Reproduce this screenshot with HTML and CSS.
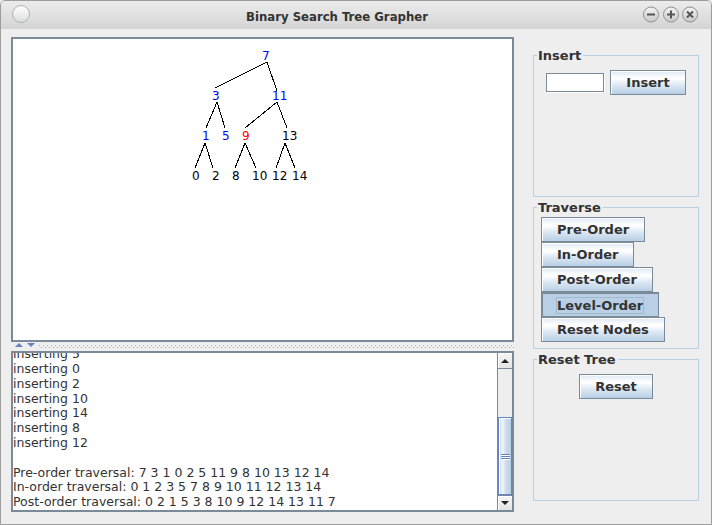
FILE: index.html
```html
<!DOCTYPE html>
<html>
<head>
<meta charset="utf-8">
<title>Binary Search Tree Grapher</title>
<link rel="stylesheet" href="styles.css">
</head>
<body>
<div class="window">
  <div class="titlebar">
    <svg class="tb-menu" width="22" height="28" viewBox="0 0 22 28">
      <defs>
        <linearGradient id="gMenu" x1="0" y1="0" x2="0" y2="1">
          <stop offset="0" stop-color="#ffffff"/>
          <stop offset="1" stop-color="#dcdcdc"/>
        </linearGradient>
        <linearGradient id="gBtn" x1="0" y1="0" x2="0" y2="1">
          <stop offset="0" stop-color="#f4f4f4"/>
          <stop offset="1" stop-color="#c9c9c9"/>
        </linearGradient>
      </defs>
      <circle cx="11" cy="13" r="8.5" fill="url(#gMenu)" stroke="#a9b1bb" stroke-width="1"/>
    </svg>
    <div class="title">Binary Search Tree Grapher</div>
    <svg class="tb-buttons" width="58" height="28" viewBox="0 0 58 28">
      <circle cx="9" cy="13.5" r="7.5" fill="url(#gBtn)" stroke="#8f8f8f"/>
      <rect x="5" y="12.5" width="8" height="2" fill="#555"/>
      <circle cx="29" cy="13.5" r="7.5" fill="url(#gBtn)" stroke="#8f8f8f"/>
      <rect x="25" y="12.5" width="8" height="2" fill="#555"/>
      <rect x="28" y="9.5" width="2" height="8" fill="#555"/>
      <circle cx="48" cy="13.5" r="7.5" fill="url(#gBtn)" stroke="#8f8f8f"/>
      <path d="M45 10.5 L51 16.5 M51 10.5 L45 16.5" stroke="#555" stroke-width="2"/>
    </svg>
  </div>

  <div class="content">
    <div class="left">
      <div class="tree-panel">
        <svg width="499" height="301" viewBox="13 39 499 301" class="tree">
          <g stroke="#000" stroke-width="1" shape-rendering="crispEdges">
            <line x1="267" y1="62" x2="215" y2="88"/>
            <line x1="267" y1="62" x2="277" y2="91"/>
            <line x1="217" y1="102" x2="206" y2="128"/>
            <line x1="217" y1="102" x2="225" y2="128"/>
            <line x1="277" y1="102" x2="245" y2="128"/>
            <line x1="277" y1="102" x2="287" y2="128"/>
            <line x1="205" y1="143" x2="195" y2="168"/>
            <line x1="205" y1="143" x2="213" y2="168"/>
            <line x1="245" y1="143" x2="235" y2="168"/>
            <line x1="245" y1="143" x2="256" y2="168"/>
            <line x1="285" y1="143" x2="276" y2="168"/>
            <line x1="285" y1="143" x2="295" y2="168"/>
          </g>
          <g class="nodes">
            <text x="262" y="60" class="blue">7</text>
            <text x="212" y="100" class="blue">3</text>
            <text x="272" y="100" class="blue">11</text>
            <text x="202" y="140" class="blue">1</text>
            <text x="222" y="140" class="blue">5</text>
            <text x="242" y="140" class="red">9</text>
            <text x="282" y="140">13</text>
            <text x="192" y="180">0</text>
            <text x="212" y="180">2</text>
            <text x="232" y="180">8</text>
            <text x="252" y="180">10</text>
            <text x="272" y="180">12</text>
            <text x="292" y="180">14</text>
          </g>
        </svg>
      </div>

      <div class="divider">
        <span class="div-arrow up"></span>
        <span class="div-arrow down"></span>
        <div class="dots"></div>
      </div>

      <div class="log">
        <div class="log-view">
          <div class="log-text">inserting 7
inserting 3
inserting 11
inserting 1
inserting 9
inserting 13
inserting 5
inserting 0
inserting 2
inserting 10
inserting 14
inserting 8
inserting 12

Pre-order traversal: 7 3 1 0 2 5 11 9 8 10 13 12 14
In-order traversal: 0 1 2 3 5 7 8 9 10 11 12 13 14
Post-order traversal: 0 2 1 5 3 8 10 9 12 14 13 11 7</div>
        </div>
        <div class="scrollbar">
          <div class="sb-btn sb-up"><span class="tri-up"></span></div>
          <div class="sb-track"></div>
          <div class="sb-thumb"><span class="grip"></span><span class="grip"></span><span class="grip"></span></div>
          <div class="sb-btn sb-down"><span class="tri-down"></span></div>
        </div>
      </div>
    </div>

    <div class="right">
      <div class="group">
        <div class="group-title">Insert</div>
        <div class="insert-row">
          <input class="field" type="text" value="">
          <button class="btn">Insert</button>
        </div>
      </div>

      <div class="group">
        <div class="group-title">Traverse</div>
        <div class="stack">
          <button class="btn">Pre-Order</button>
          <button class="btn">In-Order</button>
          <button class="btn">Post-Order</button>
          <button class="btn pressed"><span class="focus">Level-Order</span></button>
          <button class="btn">Reset Nodes</button>
        </div>
      </div>

      <div class="group">
        <div class="group-title">Reset Tree</div>
        <div class="center-row">
          <button class="btn">Reset</button>
        </div>
      </div>
    </div>
  </div>
</div>
</body>
</html>
```

FILE: styles.css
```css
* { box-sizing: border-box; }
html, body { margin: 0; padding: 0; }
body {
  width: 712px;
  height: 525px;
  background: #eeeeee;
  font-family: "DejaVu Sans", sans-serif;
  overflow: hidden;
}

.window {
  width: 712px;
  height: 525px;
  border: 1px solid #9d9d9d;
  border-radius: 5px 5px 0 0;
  background: #eeeeee;
  display: flex;
  flex-direction: column;
  overflow: hidden;
}

.titlebar {
  height: 28px;
  flex: none;
  display: flex;
  align-items: center;
  padding: 0 11px 0 9px;
  background: linear-gradient(#ececec, #d4d4d4);
}
.tb-menu, .tb-buttons { display: block; flex: none; }
.title {
  flex: 1;
  text-align: center;
  font-family: "DejaVu Sans Condensed", "DejaVu Sans", sans-serif;
  font-stretch: condensed;
  font-weight: bold;
  font-size: 13px;
  line-height: 15px;
  padding-top: 2px;
  color: #333333;
}

.content {
  flex: 1;
  display: flex;
  gap: 19px;
  padding: 8px 12px 0 10px;
}

.left {
  width: 503px;
  flex: none;
  display: flex;
  flex-direction: column;
}

.tree-panel {
  height: 305px;
  border: 2px solid #7a8a99;
  background: #ffffff;
}
.tree { display: block; }
.nodes text {
  font-family: "DejaVu Sans", sans-serif;
  font-size: 12px;
  fill: #000000;
}
.nodes text.blue { fill: #0000ff; }
.nodes text.red { fill: #ff0000; }

.divider {
  height: 9px;
  display: flex;
  align-items: flex-start;
  padding: 1px 0 0 4px;
}
.div-arrow {
  width: 0;
  height: 0;
  border-left: 4px solid transparent;
  border-right: 4px solid transparent;
  margin-right: 4px;
  flex: none;
}
.div-arrow.up { border-bottom: 4px solid #6382bf; }
.div-arrow.down { border-top: 4px solid #6382bf; }
.dots {
  flex: 1;
  height: 3px;
  margin-top: 2px;
  background-image:
    repeating-linear-gradient(90deg, #a4adb6 0 1px, transparent 1px 4px),
    repeating-linear-gradient(90deg, transparent 0 2px, #a4adb6 2px 3px, transparent 3px 4px);
  background-size: 100% 1px, 100% 1px;
  background-position: 0 0, 0 2px;
  background-repeat: no-repeat;
}

.log {
  height: 161px;
  border: 2px solid #7a8a99;
  background: #ffffff;
  display: flex;
}
.log-view {
  flex: 1;
  overflow: hidden;
  display: flex;
  flex-direction: column;
  justify-content: flex-end;
}
.log-text {
  white-space: pre;
  font-family: "DejaVu Sans", sans-serif;
  font-size: 12.5px;
  line-height: 14.8px;
  color: #333333;
}

.scrollbar {
  width: 15px;
  flex: none;
  display: flex;
  flex-direction: column;
  border-left: 1px solid #7a8a99;
  background: #eeeeee;
}
.sb-btn {
  display: flex;
  align-items: center;
  justify-content: center;
  background: linear-gradient(#f6f6f6, #e4e4e4);
  box-shadow: inset 1px 1px 0 #ffffff;
}
.sb-up { height: 16px; border-bottom: 1px solid #7a8a99; }
.sb-down { height: 15px; border-top: 1px solid #7a8a99; }
.tri-up, .tri-down {
  width: 0; height: 0;
  border-left: 4.5px solid transparent;
  border-right: 4.5px solid transparent;
}
.tri-up { border-bottom: 4px solid #222222; }
.tri-down { border-top: 4px solid #222222; }
.sb-track { height: 48px; background: #eeeeee; }
.sb-thumb {
  height: 78px;
  border: 1px solid #6382bf;
  background: linear-gradient(90deg, #c4d6ea 0%, #f2f6fb 30%, #cfdef0 55%, #b8cfe5 100%);
  box-shadow: inset 1px 1px 0 #ffffff;
  display: flex;
  flex-direction: column;
  align-items: center;
  justify-content: center;
  gap: 1px;
}
.grip {
  display: block;
  width: 9px;
  height: 1px;
  background: #6382bf;
  box-shadow: 0 1px 0 #ffffff;
}

.right {
  width: 166px;
  flex: none;
  margin-top: 18px;
  display: flex;
  flex-direction: column;
  gap: 10px;
}
.group {
  position: relative;
  height: 142px;
  border: 1px solid #b8cfe5;
}
.group-title {
  position: absolute;
  top: -8px;
  left: 3px;
  padding: 0 2px 0 1px;
  background: #eeeeee;
  font-weight: bold;
  font-size: 13px;
  line-height: 15px;
  color: #333333;
}

.insert-row {
  display: flex;
  justify-content: center;
  align-items: center;
  gap: 6px;
  padding-top: 14px;
}
.field {
  width: 58px;
  height: 19px;
  margin: 0;
  border: 1px solid #7a8a99;
  box-shadow: 1px 1px 0 #ffffff;
  background: #ffffff;
  padding: 0 2px;
  font-family: "DejaVu Sans", sans-serif;
  font-size: 12px;
  outline: none;
}

.btn {
  height: 25px;
  margin: 0;
  padding: 0 15px;
  border: 1px solid #7a8a99;
  border-radius: 0;
  background: linear-gradient(#dde8f3 0%, #ffffff 30%, #ffffff 35%, #dde8f3 60%, #b8cfe5 100%);
  box-shadow: inset 1px 1px 0 #ffffff;
  font-family: "DejaVu Sans", sans-serif;
  font-weight: bold;
  font-size: 13px;
  line-height: 15px;
  color: #333333;
  white-space: nowrap;
  flex: none;
}
.btn.pressed {
  background: #b8cfe5;
  box-shadow: none;
  border-left-width: 2px;
  border-top-width: 2px;
  padding: 0 15px 0 14px;
}
.focus {
  display: inline-block;
  outline: 1px solid #a3b8cc;
  line-height: 15px;
}

.stack {
  display: flex;
  flex-direction: column;
  align-items: flex-start;
  padding: 9px 0 0 7px;
}
.center-row {
  display: flex;
  justify-content: center;
  padding-top: 14px;
}
```
